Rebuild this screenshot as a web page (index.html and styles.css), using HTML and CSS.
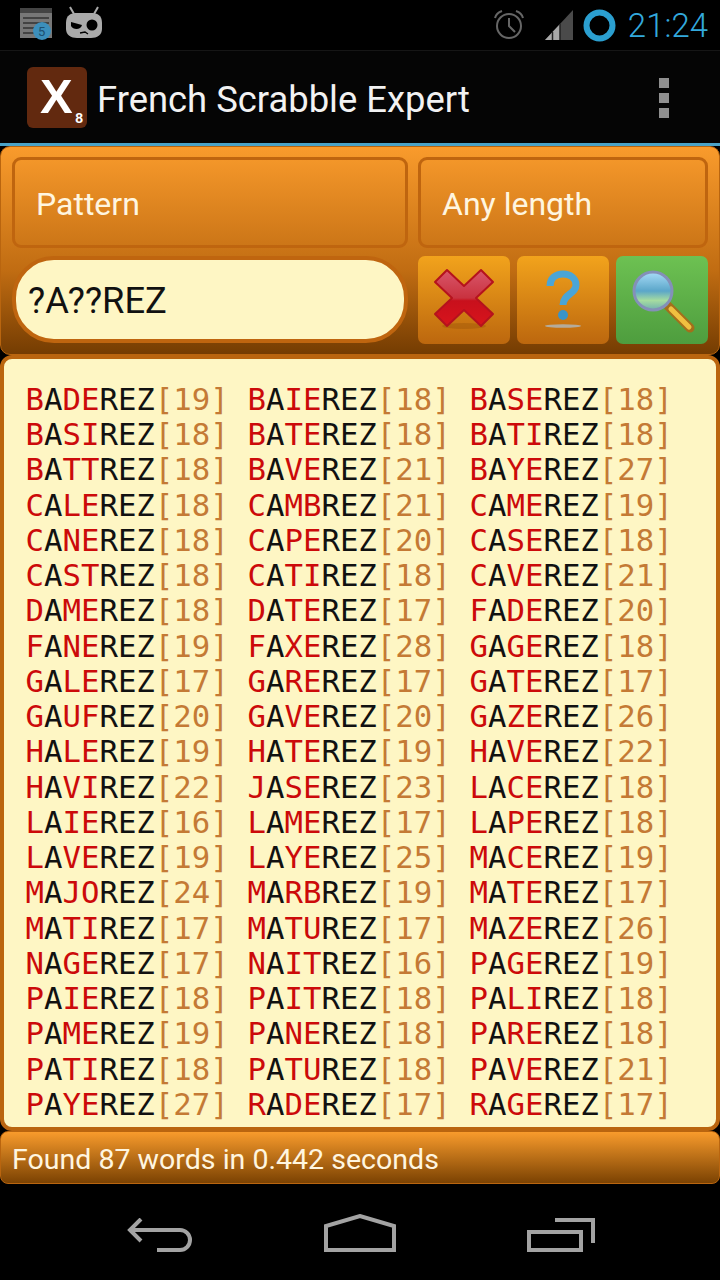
FILE: index.html
```html
<!DOCTYPE html>
<html lang="fr">
<head>
    <meta charset="UTF-8">
    <meta name="viewport" content="width=device-width, initial-scale=1.0">
    <title>French Scrabble Expert</title>
    <link rel="stylesheet" href="styles.css">
</head>
<body>
    <div class="statusbar">
        <svg class="ic-notif" width="34" height="32" viewBox="0 0 34 32">
            <rect x="1" y="0" width="32" height="30" fill="#777"/>
            <rect x="1" y="0" width="32" height="5" fill="#444"/>
            <path d="M4 10H30M4 15H30M4 20H18M4 25H18" stroke="#333" stroke-width="1.5"/>
            <circle cx="23" cy="23" r="9" fill="#3c8fbc"/>
        </svg>
        <span class="notif-num">5</span>
        <svg class="ic-mascot" width="38" height="32" viewBox="0 0 38 32">
            <path d="M5 1L9 8M33 1L29 8" stroke="#aaa" stroke-width="2"/>
            <path d="M1 17C1 9 6 7 12 7H26C32 7 37 9 37 17V23C37 29 32 32 26 32H12C6 32 1 29 1 23Z" fill="#aaa"/>
            <path d="M6 16L17 19C16 24 8 24 6 20Z" fill="#000"/>
            <circle cx="27" cy="19" r="5.5" fill="#000"/>
            <path d="M15 27L20 26L23 28" stroke="#000" stroke-width="1.3" fill="none"/>
        </svg>
        <span class="spacer"></span>
        <svg class="ic-alarm" width="32" height="30" viewBox="0 0 32 30">
            <circle cx="16" cy="16" r="12" fill="none" stroke="#666" stroke-width="2"/>
            <path d="M16 8V16L22 22" fill="none" stroke="#666" stroke-width="2"/>
            <path d="M2 8C3 4 6 2 9 1M30 8C29 4 26 2 23 1" fill="none" stroke="#666" stroke-width="2"/>
        </svg>
        <svg class="ic-signal" width="29" height="30" viewBox="0 0 29 30">
            <path d="M28 0V30H0Z" fill="#4a4a4a"/>
            <path d="M15 14V30H0Z" fill="#a8a8a8"/>
            <path d="M7.5 22V30M15 14V30" stroke="#222" stroke-width="1.5"/>
        </svg>
        <svg class="ic-ring" width="33" height="33" viewBox="0 0 33 33">
            <circle cx="16.5" cy="16.5" r="13" fill="none" stroke="#2b9fd0" stroke-width="6"/>
        </svg>
        <span class="clock">21:24</span>
    </div>

    <div class="actionbar">
        <div class="logo">X<span class="logo-pts">8</span></div>
        <h1 class="app-title">French Scrabble Expert</h1>
        <div class="overflow"><span></span><span></span><span></span></div>
    </div>
    <div class="holo-line"></div>

    <div class="search-panel">
        <div class="row">
            <div class="spinner spinner-mode">Pattern</div>
            <div class="spinner spinner-len">Any length</div>
        </div>
        <div class="row">
            <div class="pattern-input">?A??REZ</div>
            <div class="btns">
                <div class="btn">
                    <svg width="66" height="64" viewBox="0 0 66 64">
                        <defs>
                            <linearGradient id="redg" x1="0" y1="0" x2="0" y2="1">
                                <stop offset="0" stop-color="#d9566a"/>
                                <stop offset="0.5" stop-color="#c9323f"/>
                                <stop offset="0.55" stop-color="#c8101c"/>
                                <stop offset="1" stop-color="#d8141c"/>
                            </linearGradient>
                        </defs>
                        <ellipse cx="33" cy="58" rx="22" ry="3" fill="#8a4a08" opacity="0.3"/>
                        <path d="M16 2L33 18L50 2L62 14L45 30L62 46L50 58L33 42L16 58L4 46L21 30L4 14Z" fill="url(#redg)" stroke="#b5121d" stroke-width="2" stroke-linejoin="round"/>
                    </svg>
                </div>
                <div class="btn">
                    <svg width="44" height="62" viewBox="0 0 44 62">
                        <path d="M9 17C9 9 15 5 22 5C29 5 35 9 35 16C35 25 22 25 22 36" fill="none" stroke="#4aa5d6" stroke-width="7"/>
                        <circle cx="22" cy="46" r="5" fill="#3a94c8"/>
                        <ellipse cx="22" cy="57" rx="18" ry="1.7" fill="#b5ab9a"/>
                    </svg>
                </div>
                <div class="btn btn-go">
                    <svg width="66" height="66" viewBox="0 0 66 66">
                        <defs>
                            <linearGradient id="lens" x1="0" y1="0" x2="0" y2="1">
                                <stop offset="0" stop-color="#a8dcf8"/>
                                <stop offset="0.5" stop-color="#5ba6c9"/>
                                <stop offset="0.75" stop-color="#a6dca0"/>
                                <stop offset="1" stop-color="#6fb0b0"/>
                            </linearGradient>
                        </defs>
                        <path d="M39 39L61 61" stroke="#a36f1b" stroke-width="9" stroke-linecap="round"/>
                        <path d="M42 42L60 60" stroke="#f0c040" stroke-width="5" stroke-linecap="round"/>
                        <circle cx="24" cy="24" r="19" fill="url(#lens)" stroke="#8490b8" stroke-width="3"/>
                    </svg>
                </div>
            </div>
        </div>
    </div>

    <div class="results">
        <div class="cell"><b>B</b>A<b>DE</b>REZ<i>[19]</i></div>
        <div class="cell"><b>B</b>A<b>IE</b>REZ<i>[18]</i></div>
        <div class="cell"><b>B</b>A<b>SE</b>REZ<i>[18]</i></div>
        <div class="cell"><b>B</b>A<b>SI</b>REZ<i>[18]</i></div>
        <div class="cell"><b>B</b>A<b>TE</b>REZ<i>[18]</i></div>
        <div class="cell"><b>B</b>A<b>TI</b>REZ<i>[18]</i></div>
        <div class="cell"><b>B</b>A<b>TT</b>REZ<i>[18]</i></div>
        <div class="cell"><b>B</b>A<b>VE</b>REZ<i>[21]</i></div>
        <div class="cell"><b>B</b>A<b>YE</b>REZ<i>[27]</i></div>
        <div class="cell"><b>C</b>A<b>LE</b>REZ<i>[18]</i></div>
        <div class="cell"><b>C</b>A<b>MB</b>REZ<i>[21]</i></div>
        <div class="cell"><b>C</b>A<b>ME</b>REZ<i>[19]</i></div>
        <div class="cell"><b>C</b>A<b>NE</b>REZ<i>[18]</i></div>
        <div class="cell"><b>C</b>A<b>PE</b>REZ<i>[20]</i></div>
        <div class="cell"><b>C</b>A<b>SE</b>REZ<i>[18]</i></div>
        <div class="cell"><b>C</b>A<b>ST</b>REZ<i>[18]</i></div>
        <div class="cell"><b>C</b>A<b>TI</b>REZ<i>[18]</i></div>
        <div class="cell"><b>C</b>A<b>VE</b>REZ<i>[21]</i></div>
        <div class="cell"><b>D</b>A<b>ME</b>REZ<i>[18]</i></div>
        <div class="cell"><b>D</b>A<b>TE</b>REZ<i>[17]</i></div>
        <div class="cell"><b>F</b>A<b>DE</b>REZ<i>[20]</i></div>
        <div class="cell"><b>F</b>A<b>NE</b>REZ<i>[19]</i></div>
        <div class="cell"><b>F</b>A<b>XE</b>REZ<i>[28]</i></div>
        <div class="cell"><b>G</b>A<b>GE</b>REZ<i>[18]</i></div>
        <div class="cell"><b>G</b>A<b>LE</b>REZ<i>[17]</i></div>
        <div class="cell"><b>G</b>A<b>RE</b>REZ<i>[17]</i></div>
        <div class="cell"><b>G</b>A<b>TE</b>REZ<i>[17]</i></div>
        <div class="cell"><b>G</b>A<b>UF</b>REZ<i>[20]</i></div>
        <div class="cell"><b>G</b>A<b>VE</b>REZ<i>[20]</i></div>
        <div class="cell"><b>G</b>A<b>ZE</b>REZ<i>[26]</i></div>
        <div class="cell"><b>H</b>A<b>LE</b>REZ<i>[19]</i></div>
        <div class="cell"><b>H</b>A<b>TE</b>REZ<i>[19]</i></div>
        <div class="cell"><b>H</b>A<b>VE</b>REZ<i>[22]</i></div>
        <div class="cell"><b>H</b>A<b>VI</b>REZ<i>[22]</i></div>
        <div class="cell"><b>J</b>A<b>SE</b>REZ<i>[23]</i></div>
        <div class="cell"><b>L</b>A<b>CE</b>REZ<i>[18]</i></div>
        <div class="cell"><b>L</b>A<b>IE</b>REZ<i>[16]</i></div>
        <div class="cell"><b>L</b>A<b>ME</b>REZ<i>[17]</i></div>
        <div class="cell"><b>L</b>A<b>PE</b>REZ<i>[18]</i></div>
        <div class="cell"><b>L</b>A<b>VE</b>REZ<i>[19]</i></div>
        <div class="cell"><b>L</b>A<b>YE</b>REZ<i>[25]</i></div>
        <div class="cell"><b>M</b>A<b>CE</b>REZ<i>[19]</i></div>
        <div class="cell"><b>M</b>A<b>JO</b>REZ<i>[24]</i></div>
        <div class="cell"><b>M</b>A<b>RB</b>REZ<i>[19]</i></div>
        <div class="cell"><b>M</b>A<b>TE</b>REZ<i>[17]</i></div>
        <div class="cell"><b>M</b>A<b>TI</b>REZ<i>[17]</i></div>
        <div class="cell"><b>M</b>A<b>TU</b>REZ<i>[17]</i></div>
        <div class="cell"><b>M</b>A<b>ZE</b>REZ<i>[26]</i></div>
        <div class="cell"><b>N</b>A<b>GE</b>REZ<i>[17]</i></div>
        <div class="cell"><b>N</b>A<b>IT</b>REZ<i>[16]</i></div>
        <div class="cell"><b>P</b>A<b>GE</b>REZ<i>[19]</i></div>
        <div class="cell"><b>P</b>A<b>IE</b>REZ<i>[18]</i></div>
        <div class="cell"><b>P</b>A<b>IT</b>REZ<i>[18]</i></div>
        <div class="cell"><b>P</b>A<b>LI</b>REZ<i>[18]</i></div>
        <div class="cell"><b>P</b>A<b>ME</b>REZ<i>[19]</i></div>
        <div class="cell"><b>P</b>A<b>NE</b>REZ<i>[18]</i></div>
        <div class="cell"><b>P</b>A<b>RE</b>REZ<i>[18]</i></div>
        <div class="cell"><b>P</b>A<b>TI</b>REZ<i>[18]</i></div>
        <div class="cell"><b>P</b>A<b>TU</b>REZ<i>[18]</i></div>
        <div class="cell"><b>P</b>A<b>VE</b>REZ<i>[21]</i></div>
        <div class="cell"><b>P</b>A<b>YE</b>REZ<i>[27]</i></div>
        <div class="cell"><b>R</b>A<b>DE</b>REZ<i>[17]</i></div>
        <div class="cell"><b>R</b>A<b>GE</b>REZ<i>[17]</i></div>
    </div>

    <div class="found">Found 87 words in 0.442 seconds</div>

    <div class="navbar">
        <svg width="66" height="34" viewBox="0 0 66 34">
            <path d="M14 1L3 12L14 23M3 12H53A10 10 0 0 1 53 32H30" fill="none" stroke="#a3a3a3" stroke-width="4"/>
        </svg>
        <svg width="72" height="38" viewBox="0 0 72 38">
            <path d="M2 36V12L36 2L70 12V36Z" fill="none" stroke="#a3a3a3" stroke-width="4"/>
        </svg>
        <svg width="68" height="34" viewBox="0 0 68 34">
            <rect x="2" y="14" width="52" height="18" fill="none" stroke="#a3a3a3" stroke-width="4"/>
            <path d="M28 2H66V25" fill="none" stroke="#a3a3a3" stroke-width="4"/>
        </svg>
    </div>
</body>
</html>
```

FILE: styles.css
```css
* {
    box-sizing: border-box;
}
body {
    margin: 0;
    width: 720px;
    height: 1280px;
    background-color: #000;
    font-family: 'Roboto', sans-serif;
    overflow: hidden;
}

.statusbar {
    position: relative;
    height: 51px;
    display: flex;
    align-items: center;
    border-bottom: 1px solid #161616;
    padding: 0 12px 0 19px;
}
.ic-notif {
    margin-top: -2px;
}
.notif-num {
    position: absolute;
    left: 38px;
    top: 24px;
    font-size: 13px;
    color: #1d4f70;
}
.ic-mascot {
    margin-left: 12px;
    margin-top: -6px;
}
.spacer {
    flex: 1;
}
.ic-alarm {
    margin-right: 20px;
}
.ic-signal {
    margin-right: 9px;
}
.ic-ring {
    margin-right: 12px;
}
.clock {
    font-size: 33px;
    font-weight: 300;
    color: #33a9dc;
}

.actionbar {
    height: 92px;
    display: flex;
    align-items: center;
    padding-left: 27px;
    background-color: #050505;
}
.logo {
    position: relative;
    width: 60px;
    height: 61px;
    border-radius: 6px;
    background-color: #62290f;
    color: #fff;
    font-family: 'Liberation Sans', sans-serif;
    font-weight: bold;
    font-size: 49px;
    line-height: 58px;
    padding-left: 13px;
}
.logo-pts {
    position: absolute;
    right: 4px;
    bottom: 3px;
    font-size: 14px;
    line-height: 14px;
}
.app-title {
    margin: 0 0 0 10px;
    padding-top: 4px;
    font-size: 36.4px;
    font-weight: 400;
    color: #f2f2f2;
    flex: 1;
}
.overflow {
    display: flex;
    flex-direction: column;
    gap: 5px;
    margin: 2px 51px 0 0;
}
.overflow span {
    display: block;
    width: 10px;
    height: 10px;
    background-color: #8f8f8f;
}
.holo-line {
    height: 3px;
    background-color: #4aa3c8;
}

.search-panel {
    height: 209px;
    padding: 10px 10px 0 11px;
    border: 1px solid #b9650f;
    border-radius: 10px;
    background: linear-gradient(#f99b2c, #c06c12 60%, #743c02);
}
.row {
    display: flex;
    gap: 10px;
}
.row + .row {
    margin-top: 8px;
}
.spinner {
    height: 91px;
    border: 3px solid #bf650f;
    border-radius: 9px;
    color: #fff6e0;
    font-size: 32px;
    line-height: 89px;
    padding-left: 21px;
}
.spinner-mode {
    width: 396px;
}
.spinner-len {
    width: 290px;
}
.pattern-input {
    width: 396px;
    height: 87px;
    border: 4px solid #bf650f;
    border-radius: 42px;
    background-color: #fef6c4;
    color: #111;
    font-size: 36.3px;
    line-height: 82px;
    padding-left: 12px;
}
.btns {
    display: flex;
    gap: 7px;
}
.btn {
    width: 92px;
    height: 88px;
    border-radius: 7px;
    background: linear-gradient(#f2a31c, #bc670e);
    display: flex;
    align-items: center;
    justify-content: center;
}
.btn-go {
    background: linear-gradient(#6dc152, #4e9d3e);
}

.results {
    height: 776px;
    padding: 22.75px 0 0 21.5px;
    border: 4px solid #ba650f;
    border-radius: 12px;
    background-color: #fef6c4;
    display: grid;
    grid-template-columns: repeat(3, 222px);
    grid-auto-rows: 35.25px;
    font-family: 'DejaVu Sans Mono', monospace;
    font-size: 30.7px;
    color: #111;
}
.cell {
    line-height: 35px;
    white-space: nowrap;
}
.cell b {
    font-weight: 400;
    color: #cc0a0a;
}
.cell i {
    font-style: normal;
    color: #c47a35;
}

.found {
    height: 53px;
    padding-left: 11px;
    border: 1px solid #b9650f;
    border-radius: 8px;
    background: linear-gradient(#f89b2c, #7b4202);
    color: #fff6e0;
    font-size: 28.55px;
    line-height: 55px;
}

.navbar {
    height: 96px;
    display: flex;
    align-items: flex-end;
    padding: 0 125px 28px 127px;
    justify-content: space-between;
}
```
